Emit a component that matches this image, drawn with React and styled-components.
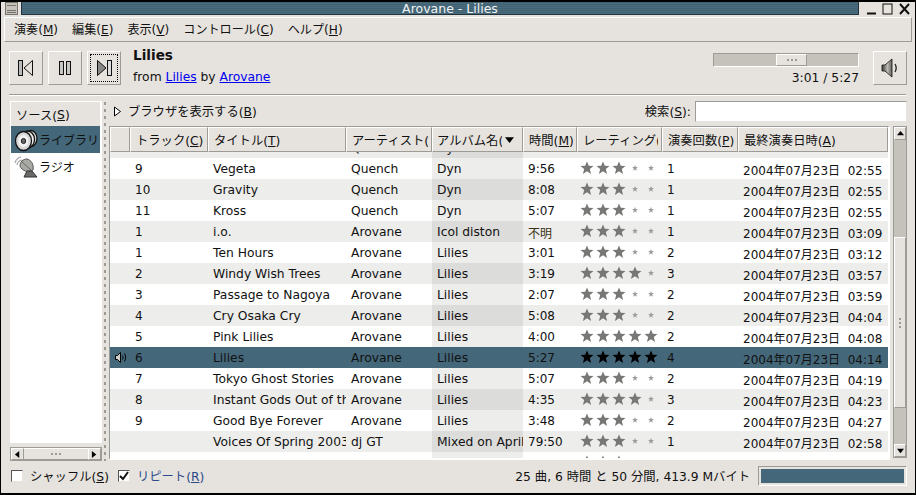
import * as React from 'react'
import styled, { createGlobalStyle } from 'styled-components'

const BG = '#e6e3de'
const SEL = '#446779'
const DARK = '#9d9b96'
const TROUGH = '#c5c2bc'

const Global = createGlobalStyle`
  html, body { margin: 0; padding: 0; background: ${BG}; }
  body { width: 916px; height: 495px; overflow: hidden; font-family: "DejaVu Sans", "Noto Sans CJK JP", sans-serif; font-size: 12.3px; color: #111; }
  * { box-sizing: border-box; }
`

const raised = `
  border-top: 1px solid #fff;
  border-left: 1px solid #fff;
  border-bottom: 1px solid ${DARK};
  border-right: 1px solid ${DARK};
`
const sunken = `
  border-top: 1px solid ${DARK};
  border-left: 1px solid ${DARK};
  border-bottom: 1px solid #fff;
  border-right: 1px solid #fff;
`

const Window = styled.div`
  width: 916px;
  height: 495px;
  display: flex;
  flex-direction: column;
  border: 1px solid #000;
  border-top-width: 2px;
  border-bottom-width: 2px;
  background: ${BG};
  overflow: hidden;
`
const TitleBar = styled.div`
  height: 13px;
  display: flex;
  align-items: stretch;
  flex-shrink: 0;
`
const TitleIcon = styled.div`
  width: 20px;
  padding: 0 3px 0 4px;
  display: flex;
  align-items: center;
`
const TitleFill = styled.div`
  flex: 1;
  background: repeating-linear-gradient(to bottom, #3f6172 0, #3f6172 1px, #4a6c7d 1px, #4a6c7d 2px);
  border: 1px solid #20333d;
  border-top: none;
  color: #f2f4f4;
  font-size: 12.5px;
  line-height: 14px;
  padding-left: 20px;
  text-align: center;
  overflow: hidden;
`
const TitleButtons = styled.div`
  width: 56px;
  display: flex;
  align-items: center;
  justify-content: space-around;
  padding: 0 2px 0 4px;
`
const MenuBar = styled.div`
  height: 25px;
  margin: 2px 3px 0 3px;
  display: flex;
  align-items: center;
  padding: 0 0 2px 9px;
  gap: 14px;
  font-size: 12.1px;
  ${raised}
  flex-shrink: 0;
`
const MenuItem = styled.span`
  white-space: nowrap;
`
const Player = styled.div`
  height: 52px;
  display: flex;
  align-items: flex-start;
  padding: 9px 8px 0 8px;
  flex-shrink: 0;
`
const ToolButton = styled.div`
  width: 34px;
  height: 34px;
  margin-right: ${p => p.$gap}px;
  display: flex;
  align-items: center;
  justify-content: center;
  flex-shrink: 0;
  ${raised}
  ${p => p.$focus && `outline: 1px dotted #000; outline-offset: -4px;`}
`
const TrackInfo = styled.div`
  flex: 1;
  padding-left: 12px;
  margin-top: -5px;
`
const TrackTitle = styled.div`
  font-weight: bold;
  font-size: 13.6px;
  line-height: 18px;
`
const TrackMeta = styled.div`
  margin-top: 4px;
  line-height: 18px;
  white-space: nowrap;
`
const Link = styled.span`
  color: #0000ee;
  text-decoration: underline;
`
const Seek = styled.div`
  width: 146px;
  margin-right: 14px;
  display: flex;
  flex-direction: column;
  align-items: flex-end;
  margin-top: 2px;
`
const SeekTrough = styled.div`
  width: 146px;
  height: 14px;
  background: ${TROUGH};
  ${sunken}
  padding-left: 62px;
`
const SeekThumb = styled.div`
  width: 31px;
  height: 12px;
  background: ${BG};
  ${raised}
  display: flex;
  align-items: center;
  justify-content: center;
  gap: 2px;
`
const Dot = styled.i`
  width: 2px;
  height: 2px;
  background: ${DARK};
`
const SeekTime = styled.div`
  margin-top: 2px;
  line-height: 18px;
`
const Rule = styled.div`
  height: 2px;
  margin: 0 9px 0 8px;
  background: ${DARK};
  border-bottom: 1px solid #fff;
  flex-shrink: 0;
`
const Body = styled.div`
  display: flex;
  height: 361px;
  margin-top: 4px;
  padding-left: 9px;
  padding-right: 8px;
`
const Side = styled.div`
  width: 92px;
  padding-top: 1px;
  display: flex;
  flex-direction: column;
  flex-shrink: 0;
`
const SideFrame = styled.div`
  height: 342px;
  border: 1px solid ${TROUGH};
  border-left: 1px solid #fff;
  border-top: 1px solid #fff;
  border-bottom: 2px solid #fff;
  border-right: 2px solid #fff;
  background: #fff;
  display: flex;
  flex-direction: column;
  overflow: hidden;
`
const SideHead = styled.div`
  height: 24px;
  background: ${BG};
  display: flex;
  align-items: center;
  padding: 2px 0 0 5px;
  white-space: nowrap;
  flex-shrink: 0;
`
const SideItem = styled.div`
  height: 27px;
  display: flex;
  align-items: center;
  padding-left: 3px;
  gap: 1px;
  font-size: 12px;
  white-space: nowrap;
  background: ${p => (p.$active ? SEL : '#fff')};
  flex-shrink: 0;
`
const HScroll = styled.div`
  margin-top: 4px;
  height: 14px;
  display: flex;
  background: ${TROUGH};
  border: 1px solid ${DARK};
`
const ScrollButton = styled.div`
  width: 13px;
  display: flex;
  align-items: center;
  justify-content: center;
  background: ${BG};
  ${raised}
  flex-shrink: 0;
`
const HThumb = styled.div`
  flex: 1;
  background: ${BG};
  display: flex;
  align-items: center;
  justify-content: center;
  gap: 2px;
  border-top: 1px solid #fff;
  border-bottom: 1px solid ${DARK};
`
const Gutter = styled.div`
  width: 6px;
  margin-left: 1px;
  flex-shrink: 0;
  background-image: radial-gradient(#9d9b96 0.8px, transparent 1px);
  background-size: 4px 7px;
  background-repeat: repeat-y;
`
const Main = styled.div`
  flex: 1;
  min-width: 0;
  display: flex;
  flex-direction: column;
`
const BrowserRow = styled.div`
  height: 23px;
  display: flex;
  align-items: center;
  flex-shrink: 0;
`
const Disclosure = styled.div`
  width: 19px;
  padding-left: 4px;
  display: flex;
  align-items: center;
  flex-shrink: 0;
`
const BrowserLabel = styled.div`
  flex: 1;
  white-space: nowrap;
  padding-bottom: 2px;
`
const SearchLabel = styled.div`
  white-space: nowrap;
  margin-right: 4px;
  padding-bottom: 2px;
`
const SearchInput = styled.div`
  width: 212px;
  height: 21px;
  background: #fff;
  border-top: 1px solid ${DARK};
  border-left: 1px solid ${DARK};
  border-bottom: 1px solid ${BG};
  border-right: 1px solid ${BG};
`
const TableWrap = styled.div`
  height: 337px;
  display: flex;
  gap: 3px;
  padding-top: 3px;
`
const TableFrame = styled.div`
  width: 781px;
  display: flex;
  flex-direction: column;
  overflow: hidden;
  background: #fff;
  border-top: 1px solid ${DARK};
  border-left: 1px solid ${DARK};
  border-bottom: 2px solid #fff;
  border-right: 2px solid #fff;
`
const HeadRow = styled.div`
  display: flex;
  height: 25px;
  flex-shrink: 0;
  background: ${BG};
`
const HeadCell = styled.div`
  width: ${p => p.$w}px;
  flex-shrink: 0;
  display: flex;
  align-items: center;
  padding: 0 ${p => (p.$sorted ? 8 : 3)}px 0 ${p => (p.$sorted ? 4 : 5)}px;
  overflow: hidden;
  white-space: nowrap;
  ${raised}
`
const HeadText = styled.span`
  overflow: hidden;
  flex: 1;
`
const SortArrow = styled.span`
  display: flex;
  margin-left: 3px;
  flex-shrink: 0;
`
const Rows = styled.div`
  flex: 1;
  overflow: hidden;
`
const Row = styled.div`
  display: flex;
  height: ${p => p.$h || 21}px;
  align-items: ${p => (p.$h ? 'flex-end' : 'center')};
  overflow: hidden;
  background: ${p => (p.$sel ? SEL : p.$alt ? '#ededeb' : '#fff')};
`
const Cell = styled.div`
  width: ${p => p.$w}px;
  height: 21px;
  flex-shrink: 0;
  overflow: hidden;
  white-space: nowrap;
  padding: 1px 0 0 ${p => p.$pl ?? 5}px;
  display: flex;
  align-items: center;
  background: ${p => p.$bg || 'transparent'};
  color: ${p => (p.$warn ? '#3a3212' : 'inherit')};
  font-size: ${p => (p.$small ? '12px' : 'inherit')};
`
const Stars = styled.div`
  display: flex;
  align-items: center;
  padding-left: 2px;
  margin-top: -3px;
`
const ScrollV = styled.div`
  width: 14px;
  height: 332px;
  display: flex;
  flex-direction: column;
  background: ${TROUGH};
  border: 1px solid ${DARK};
`
const VButton = styled.div`
  height: 13px;
  display: flex;
  align-items: center;
  justify-content: center;
  background: ${BG};
  ${raised}
  flex-shrink: 0;
`
const VGap = styled.div`
  height: ${p => p.$h}px;
  flex-shrink: 0;
`
const VThumb = styled.div`
  flex: 1;
  background: ${BG};
  ${raised}
  display: flex;
  flex-direction: column;
  align-items: center;
  justify-content: center;
  gap: 2px;
`
const Footer = styled.div`
  flex: 1;
  display: flex;
  align-items: center;
  padding: 0 8px 2px 10px;
`
const Check = styled.div`
  width: 12px;
  height: 12px;
  background: #fff;
  border-top: 1px solid #555;
  border-left: 1px solid #555;
  border-bottom: 1px solid ${BG};
  border-right: 1px solid ${BG};
  display: flex;
  align-items: center;
  justify-content: center;
  flex-shrink: 0;
`
const CheckLabel = styled.div`
  margin-left: 7px;
  margin-right: ${p => p.$mr || 0}px;
  white-space: nowrap;
  color: ${p => (p.$hover ? '#2c4a8a' : 'inherit')};
`
const Status = styled.div`
  flex: 1;
  text-align: right;
  white-space: nowrap;
  padding-right: 8px;
`
const Progress = styled.div`
  width: 149px;
  height: 20px;
  padding: 2px;
  ${sunken}
`
const ProgressFill = styled.div`
  height: 100%;
  background: ${SEL};
`

const Star = ({ big, color }) => (
  <svg width="16" height="14" viewBox="0 0 16 14" style={{ flexShrink: 0 }}>
    <polygon
      fill={color}
      transform={`translate(8 7) scale(${big ? 1 : 0.45})`}
      points="0,-6.5 1.8,-2.2 6.5,-2.1 2.8,1 4.1,6 0,3.3 -4.100,6 -2.8,1 -6.5,-2.1 -1.8,-2.2"
    />
  </svg>
)

const Rating = ({ n, sel }) => (
  <Stars>
    {[0, 1, 2, 3, 4].map(i => (
      <Star key={i} big={i < n} color={sel ? '#000' : i < n ? '#777775' : '#9c9c9a'} />
    ))}
  </Stars>
)

const VolumeIcon = () => (
  <svg width="18" height="20" viewBox="0 0 18 20">
    <defs>
      <linearGradient id="cone" x1="0" x2="1" y1="0" y2="0">
        <stop offset="0" stopColor="#3f3e3a" />
        <stop offset="0.55" stopColor="#bdbab4" />
        <stop offset="1" stopColor="#5f5d58" />
      </linearGradient>
    </defs>
    <path d="M1 7h3l7-6v18l-7-6H1z" fill="url(#cone)" stroke="#22211e" strokeWidth="0.9" />
    <path d="M14 6c1.500 2.500 1.500 5.500 0 8" fill="none" stroke="#22211e" strokeWidth="1.300" />
  </svg>
)

const RowSpeaker = () => (
  <svg width="13" height="11" viewBox="0 0 13 11" style={{ flexShrink: 0, marginTop: -1 }}>
    <path d="M0.500 3.500h2l3-3v10l-3-3h-2z" fill="#d0cec9" stroke="#000" />
    <path d="M7.500 3.500c.7 1.200.7 2.800 0 4M9.500 1.500c1.500 2.500 1.500 5.500 0 8" fill="none" stroke="#000" />
  </svg>
)

const PrevIcon = () => (
  <svg width="18" height="18" viewBox="0 0 18 18">
    <rect x="1.500" y="1.500" width="4" height="15" fill="#bbb" stroke="#111" />
    <path d="M15.500 1.500v15L7 9z" fill="#e6e3de" stroke="#111" />
  </svg>
)
const PauseIcon = () => (
  <svg width="14" height="18" viewBox="0 0 14 18">
    <rect x="1.500" y="2.500" width="4" height="13" fill="#c8c8c4" stroke="#111" />
    <rect x="8.500" y="2.500" width="4" height="13" fill="#c8c8c4" stroke="#111" />
  </svg>
)
const NextIcon = () => (
  <svg width="18" height="18" viewBox="0 0 18 18">
    <path d="M2.500 1.500v15L11 9z" fill="#888" stroke="#111" />
    <rect x="12.500" y="1.500" width="4" height="15" fill="#ddd" stroke="#111" />
  </svg>
)
const DiscIcon = () => (
  <svg width="24" height="24" viewBox="0 0 24 24" style={{ flexShrink: 0 }}>
    <ellipse cx="17" cy="10.500" rx="6" ry="8" fill="#cfcfcf" stroke="#111" strokeWidth="1.300" />
    <ellipse cx="13.500" cy="11.500" rx="7" ry="8.500" fill="#ececec" stroke="#111" strokeWidth="1.300" />
    <ellipse cx="9.500" cy="13" rx="8" ry="9.500" fill="#d8d8d8" stroke="#111" strokeWidth="1.300" />
    <ellipse cx="9.500" cy="13" rx="5" ry="6" fill="#f2f2f2" />
    <ellipse cx="9.500" cy="13" rx="2.200" ry="2.600" fill="#666" stroke="#222" />
  </svg>
)
const DishIcon = () => (
  <svg width="24" height="24" viewBox="0 0 24 24" style={{ flexShrink: 0 }}>
    <path d="M1 8a8 8 0 0 1 6-6M3 10a6 6 0 0 1 5-5" fill="none" stroke="#a8a8a8" strokeWidth="1.200" />
    <path d="M13 4c4 1 7 5 6 11-5 3-11 1-13-4 0-4 3-7 7-7z" fill="#a9a9a6" stroke="#555" />
    <path d="M8 7l9 8" stroke="#666" />
    <path d="M13 16l-3 6h13l-5-6z" fill="#6a6a68" stroke="#333" />
  </svg>
)
const Tick = () => (
  <svg width="10" height="10" viewBox="0 0 10 10">
    <path d="M1 5l3 3 5-7" fill="none" stroke="#111" strokeWidth="2" />
  </svg>
)
const Arrow = ({ dir, size = 7 }) => {
  const pts = { l: '6,0 6,8 1,4', r: '1,0 1,8 6,4', u: '0,6 8,6 4,1', d: '0,2 8,2 4,7' }[dir]
  return (
    <svg width={size} height={size} viewBox="0 0 8 8" style={{ flexShrink: 0 }}>
      <polygon points={pts} fill="#000" />
    </svg>
  )
}

const Mn = ({ label, k }) => (
  <>
    {label}(<u>{k}</u>)
  </>
)

const columns = [20, 78, 138, 86, 91, 54, 85, 76, 150]

const headers = [
  [null],
  ['トラック', 'C'],
  ['タイトル', 'T'],
  ['アーティスト', 'A'],
  ['アルバム名', 'B'],
  ['時間', 'M'],
  ['レーティング', 'R'],
  ['演奏回数', 'P'],
  ['最終演奏日時', 'A'],
]

const tracks = [
  ['9', 'Vegeta', 'Quench', 'Dyn', '9:56', 3, 1, '02:55'],
  ['10', 'Gravity', 'Quench', 'Dyn', '8:08', 3, 1, '02:55'],
  ['11', 'Kross', 'Quench', 'Dyn', '5:07', 3, 1, '02:55'],
  ['1', 'i.o.', 'Arovane', 'Icol diston', '不明', 3, 1, '03:09'],
  ['1', 'Ten Hours', 'Arovane', 'Lilies', '3:01', 3, 2, '03:12'],
  ['2', 'Windy Wish Trees', 'Arovane', 'Lilies', '3:19', 4, 3, '03:57'],
  ['3', 'Passage to Nagoya', 'Arovane', 'Lilies', '2:07', 3, 2, '03:59'],
  ['4', 'Cry Osaka Cry', 'Arovane', 'Lilies', '5:08', 3, 2, '04:04'],
  ['5', 'Pink Lilies', 'Arovane', 'Lilies', '4:00', 5, 2, '04:08'],
  ['6', 'Lilies', 'Arovane', 'Lilies', '5:27', 5, 4, '04:14'],
  ['7', 'Tokyo Ghost Stories', 'Arovane', 'Lilies', '5:07', 3, 2, '04:19'],
  ['8', 'Instant Gods Out of the Sky', 'Arovane', 'Lilies', '4:35', 4, 3, '04:23'],
  ['9', 'Good Bye Forever', 'Arovane', 'Lilies', '3:48', 3, 2, '04:27'],
  ['', 'Voices Of Spring 2003', 'dj GT', 'Mixed on April', '79:50', 3, 1, '02:58'],
  ['', 'Voices Of Summer 2003', 'dj GT', 'Mixed on April', '75:57', 3, 1, '02:59'],
]

const DATE = '2004年07月23日'

const TrackRow = ({ t, i }) => {
  const sel = i === 9
  const alt = i % 2 === 1
  const sortBg = sel ? SEL : alt ? '#dcdcda' : '#ededeb'
  return (
    <Row $alt={alt} $sel={sel}>
      <Cell $w={columns[0]} $pl={5}>{sel && <RowSpeaker />}</Cell>
      <Cell $w={columns[1]} $small>{t[0]}</Cell>
      <Cell $w={columns[2]}>{t[1]}</Cell>
      <Cell $w={columns[3]}>{t[2]}</Cell>
      <Cell $w={columns[4]} $bg={sortBg}>{t[3]}</Cell>
      <Cell $w={columns[5]} $small $warn={t[4] === '不明'}>{t[4]}</Cell>
      <Cell $w={columns[6]} $pl={0}><Rating n={t[5]} sel={sel} /></Cell>
      <Cell $w={columns[7]} $small>{t[6]}</Cell>
      <Cell $w={columns[8]} $small>{DATE}&nbsp;&nbsp;{t[7]}</Cell>
    </Row>
  )
}

export default function App() {
  return (
    <>
      <Global />
      <Window>
        <TitleBar>
          <TitleIcon>
            <svg width="13" height="13" viewBox="0 0 13 13">
              <rect x="0.500" y="0.500" width="12" height="12" fill="#c5c2bc" stroke="#77746e" />
              <path d="M2 3.500h9M2 8.500h9M2 10.500h9" stroke="#77746e" />
            </svg>
          </TitleIcon>
          <TitleFill>Arovane - Lilies</TitleFill>
          <TitleButtons>
            <svg width="11" height="12" viewBox="0 0 11 12"><path d="M1 10.500h9" stroke="#111" strokeWidth="2" /></svg>
            <svg width="11" height="12" viewBox="0 0 11 12"><rect x="1" y="1" width="9" height="10" fill="none" stroke="#111" /></svg>
            <svg width="11" height="12" viewBox="0 0 11 12"><path d="M1 1l9 10M10 1L1 11" stroke="#111" strokeWidth="2" /></svg>
          </TitleButtons>
        </TitleBar>
        <MenuBar>
          <MenuItem><Mn label="演奏" k="M" /></MenuItem>
          <MenuItem><Mn label="編集" k="E" /></MenuItem>
          <MenuItem><Mn label="表示" k="V" /></MenuItem>
          <MenuItem><Mn label="コントロール" k="C" /></MenuItem>
          <MenuItem><Mn label="ヘルプ" k="H" /></MenuItem>
        </MenuBar>
        <Player>
          <ToolButton $gap={5}><PrevIcon /></ToolButton>
          <ToolButton $gap={5}><PauseIcon /></ToolButton>
          <ToolButton $focus><NextIcon /></ToolButton>
          <TrackInfo>
            <TrackTitle>Lilies</TrackTitle>
            <TrackMeta>from <Link>Lilies</Link> by <Link>Arovane</Link></TrackMeta>
          </TrackInfo>
          <Seek>
            <SeekTrough>
              <SeekThumb><Dot /><Dot /><Dot /></SeekThumb>
            </SeekTrough>
            <SeekTime>3:01 / 5:27</SeekTime>
          </Seek>
          <ToolButton><VolumeIcon /></ToolButton>
        </Player>
        <Rule />
        <Body>
          <Side>
            <SideFrame>
              <SideHead><Mn label="ソース" k="S" /></SideHead>
              <SideItem $active><DiscIcon />ライブラリ</SideItem>
              <SideItem><DishIcon />ラジオ</SideItem>
            </SideFrame>
            <HScroll>
              <ScrollButton><Arrow dir="l" /></ScrollButton>
              <HThumb><Dot /><Dot /><Dot /></HThumb>
              <ScrollButton><Arrow dir="r" /></ScrollButton>
            </HScroll>
          </Side>
          <Gutter />
          <Main>
            <BrowserRow>
              <Disclosure>
                <svg width="9" height="11" viewBox="0 0 9 11"><path d="M1.500 1v9l6-4.500z" fill="#fff" stroke="#000" /></svg>
              </Disclosure>
              <BrowserLabel><Mn label="ブラウザを表示する" k="B" /></BrowserLabel>
              <SearchLabel><Mn label="検索" k="S" />:</SearchLabel>
              <SearchInput />
            </BrowserRow>
            <TableWrap>
              <TableFrame>
                <HeadRow>
                  {headers.map((h, i) => (
                    <HeadCell key={i} $w={columns[i]} $sorted={i === 4}>
                      {h[0] && <HeadText><Mn label={h[0]} k={h[1]} /></HeadText>}
                      {i === 4 && <SortArrow><Arrow dir="d" size={9} /></SortArrow>}
                    </HeadCell>
                  ))}
                </HeadRow>
                <Rows>
                  <Row $h={6} $alt>
                    <Cell $w={columns[0]} />
                    <Cell $w={columns[1]} />
                    <Cell $w={columns[2]} />
                    <Cell $w={columns[3]}>Quench</Cell>
                    <Cell $w={columns[4]} $bg="#dcdcda">Dyn</Cell>
                  </Row>
                  {tracks.map((t, i) => <TrackRow key={i} t={t} i={i} />)}
                </Rows>
              </TableFrame>
              <ScrollV>
                <VButton><Arrow dir="u" /></VButton>
                <VGap $h={97} />
                <VThumb><Dot /><Dot /><Dot /></VThumb>
                <VGap $h={36} />
                <VButton><Arrow dir="d" /></VButton>
              </ScrollV>
            </TableWrap>
          </Main>
        </Body>
        <Footer>
          <Check />
          <CheckLabel $mr={9}><Mn label="シャッフル" k="S" /></CheckLabel>
          <Check><Tick /></Check>
          <CheckLabel $hover><Mn label="リピート" k="R" /></CheckLabel>
          <Status>25 曲, 6 時間 と 50 分間, 413.9 Mバイト</Status>
          <Progress><ProgressFill /></Progress>
        </Footer>
      </Window>
    </>
  )
}
